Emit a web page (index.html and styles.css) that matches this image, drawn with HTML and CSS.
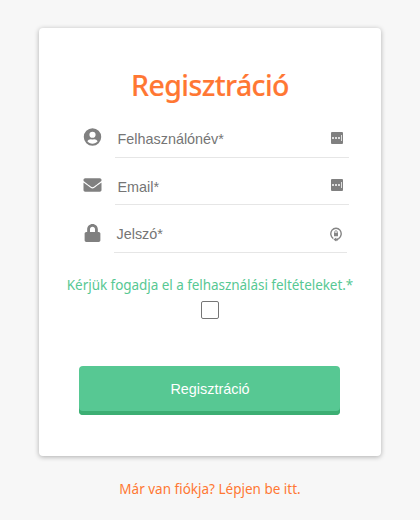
FILE: index.html
```html
<!DOCTYPE html>
<html lang="hu">
<head>
<meta charset="utf-8">
<title>Regisztráció</title>
<link rel="stylesheet" href="styles.css">
</head>
<body>
<main class="card">
  <h1 class="title"><span>Regisztráció</span></h1>
  <form class="form">
    <div class="row">
      <svg class="icon" viewBox="0 0 496 512"><path d="M248 8a248 248 0 1 0 0 496 248 248 0 1 0 0-496zm0 96a88 88 0 1 1 0 176 88 88 0 1 1 0-176zm0 344c-58.700 0-111.300-26.600-146.500-68.200 18.800-35.400 55.600-59.800 98.500-59.800 2.400 0 4.800.4 7.100 1.100 13 4.200 26.600 6.900 40.900 6.900s28-2.700 40.900-6.900c2.300-.7 4.700-1.100 7.100-1.100 42.900 0 79.700 24.400 98.500 59.800C359.300 421.400 306.700 448 248 448z"/></svg>
      <div class="field">
        <span class="label user">Felhasználónév*</span>
        <svg class="fill" viewBox="0 0 12 12"><rect width="12" height="12" rx="1"/><path class="dots" d="M1 5h2v2H1zM4 5h2v2H4zM7 5h2v2H7zM10 3h1v6h-1z"/></svg>
      </div>
    </div>
    <div class="row middle">
      <svg class="icon" viewBox="0 0 512 512"><path d="M502.300 190.800c3.900-3.100 9.700-.2 9.700 4.700V400c0 26.500-21.500 48-48 48H48c-26.500 0-48-21.500-48-48V195.600c0-5 5.700-7.800 9.700-4.700 22.400 17.400 52.100 39.500 154.100 113.600 21.100 15.400 56.700 47.800 92.200 47.600 35.700.3 72-32.800 92.300-47.600 102-74.100 131.600-96.300 154-113.700zM256 320c23.200.4 56.600-29.200 73.400-41.400 132.700-96.300 142.800-104.700 173.400-128.700 5.800-4.500 9.200-11.500 9.200-18.900v-19c0-26.500-21.500-48-48-48H48c-26.500 0-48 21.500-48 48v19c0 7.400 3.400 14.300 9.200 18.900 30.600 23.900 40.700 32.400 173.400 128.700 16.800 12.200 50.200 41.800 73.400 41.400z"/></svg>
      <div class="field">
        <span class="label email">Email*</span>
        <svg class="fill" viewBox="0 0 12 12"><rect width="12" height="12" rx="1"/><path class="dots" d="M1 5h2v2H1zM4 5h2v2H4zM7 5h2v2H7zM10 3h1v6h-1z"/></svg>
      </div>
    </div>
    <div class="row last">
      <svg class="icon" viewBox="0 0 448 512"><path d="M400 224h-24v-72C376 68.200 307.800 0 224 0S72 68.200 72 152v72H48c-26.500 0-48 21.500-48 48v192c0 26.500 21.500 48 48 48h352c26.500 0 48-21.500 48-48V272c0-26.500-21.500-48-48-48zm-104 0H152v-72c0-39.700 32.300-72 72-72s72 32.300 72 72v72z"/></svg>
      <div class="field">
        <span class="label pass">Jelszó*</span>
        <svg class="key" viewBox="0 0 12 15"><path class="ring" d="M3.300 11.600A5.200 5.600 0 1 1 8.700 11.600L6 12.800"/><path d="M4 5.800h4v3.400H4zM6.200 10.600v4L3.400 12.600zM6 11.800h2v1.600H6z"/><path class="shackle" d="M4.700 6V5a1.300 1.300 0 0 1 2.600 0v1"/></svg>
      </div>
    </div>
    <label class="terms"><span class="terms-text">Kérjük fogadja el a felhasználási feltételeket.*</span><input class="check" type="checkbox"></label>
    <button class="submit" type="button"><span>Regisztráció</span></button>
  </form>
</main>
<a class="login"><span>Már van fiókja? Lépjen be itt.</span></a>
</body>
</html>
```
FILE: styles.css
```css
* { box-sizing: border-box; }
body {
  margin: 0;
  height: 520px;
  padding-top: 28px;
  background: #f7f7f7;
  font-family: "Noto Sans", "Open Sans", sans-serif;
  display: flex;
  flex-direction: column;
  align-items: center;
  overflow: hidden;
}
.card {
  width: 342px;
  height: 428px;
  background: #fff;
  border-radius: 4px;
  box-shadow: 0 1px 5px rgba(0, 0, 0, .3);
  padding-top: 37px;
}
.title {
  margin: 0;
  height: 45px;
  line-height: 40px;
  text-align: center;
  font-size: 28.500px;
  font-weight: 500;
  letter-spacing: -.6px;
  -webkit-text-stroke: .15px #ff7733;
  color: #ff7733;
  white-space: nowrap;
}
.form { display: flex; flex-direction: column; }
.row {
  height: 47px;
  padding-left: 44px;
  display: flex;
  align-items: flex-start;
}
.icon {
  width: 19px;
  height: 18px;
  margin-top: 18px;
  margin-right: 13px;
  fill: #808080;
}
.field {
  width: 234px;
  height: 48px;
  padding: 11px 6px 0 2.500px;
  border-bottom: 1px solid #e6e6e6;
  display: flex;
  justify-content: space-between;
  align-items: center;
}
.middle { height: 48px; }
.middle .icon { margin-top: 19px; }
.last .icon { margin-top: 19px; }
.last .field { width: 233px; margin-left: -1px; }
.label {
  font: 14.400px/18px "Liberation Sans", sans-serif;
  color: #757575;
}
.middle .label { margin-top: 1px; }
.fill { width: 12px; height: 12px; margin-top: -2px; fill: #808080; }
.middle .fill { margin-top: -3px; }
.dots { fill: #dedede; }
.key { width: 12px; height: 15px; fill: #858585; margin-right: -1px; }
.ring, .shackle { fill: none; stroke: #858585; stroke-width: 1.400; }
.shackle { stroke-width: .8; }
.terms {
  display: flex;
  flex-direction: column;
  align-items: center;
  margin-top: 23px;
  font-size: 13.500px;
  line-height: 20px;
  color: #57c893;
  white-space: nowrap;
}
.terms-text { letter-spacing: -.05px; }
.check {
  appearance: none;
  width: 18px;
  height: 18px;
  margin: 6px 0 0;
  border: 1px solid #767676;
  border-radius: 2px;
  background: #fff;
}
.submit {
  width: 261px;
  height: 49px;
  margin: 47px 0 0 40px;
  padding: 0 0 4px 1px;
  border: 0;
  border-radius: 4px;
  background: #57c893;
  box-shadow: inset 0 -4px #3cae73;
  color: #fff;
  font: 14.400px "Liberation Sans", sans-serif;
}
.login {
  margin-top: 23px;
  font-size: 13.500px;
  line-height: 20px;
  color: #ff7733;
  white-space: nowrap;
}
```
